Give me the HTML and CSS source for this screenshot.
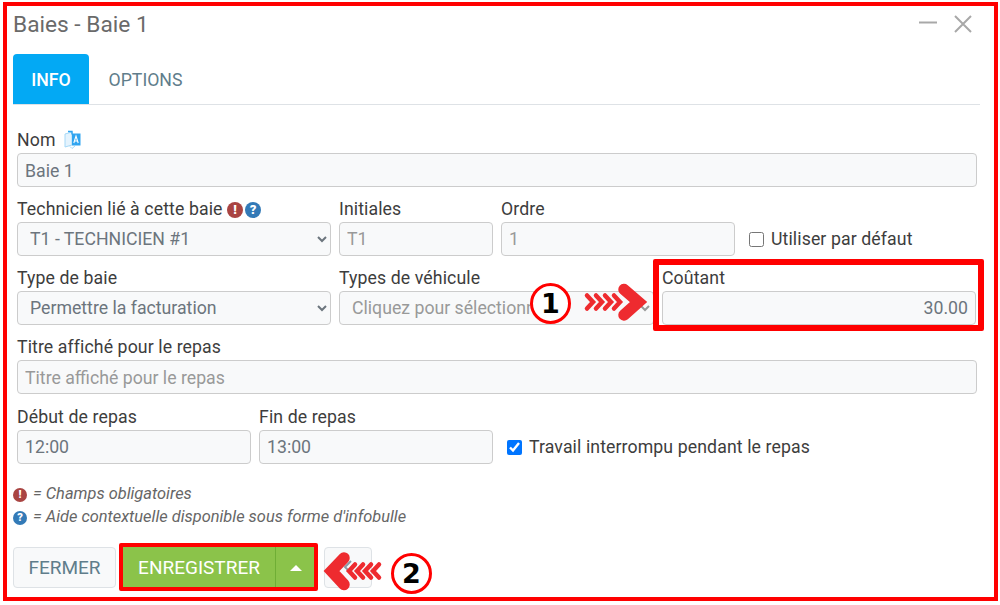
FILE: index.html
```html
<!DOCTYPE html>
<html lang="fr">
<head>
    <meta charset="UTF-8">
    <title>Baies - Baie 1</title>
    <link rel="stylesheet" href="styles.css">
</head>
<body>

<div class="dialog">
    <div class="dialog-head">
        <h1>Baies - Baie 1</h1>
        <div class="win-buttons">
            <svg width="18" height="18" viewBox="0 0 18 18"><path d="M0 7.5h18" stroke="#a8a8a8" stroke-width="2"/></svg>
            <svg width="20" height="20" viewBox="0 0 20 20"><path d="M2 2l16 16M18 2L2 18" stroke="#a8a8a8" stroke-width="2" fill="none"/></svg>
        </div>
    </div>

    <div class="tabs">
        <div class="tab active">INFO</div>
        <div class="tab">OPTIONS</div>
    </div>

    <div class="form">
        <div class="row row-full">
            <div class="field">
                <label>Nom
                    <svg class="translate" width="17" height="19" viewBox="0 0 17 19">
                        <path d="M1 4l7 -2v13l-7 2z" fill="#e4f3fd" stroke="#a5d8f7" stroke-width="1"/>
                        <path d="M8 3.5h8.5v12H8z" fill="#2fa4f0"/>
                        <path d="M4 1.5h4v3" stroke="#2fa4f0" stroke-width="1.4" fill="none"/>
                        <path d="M9.8 13l2.2-7 2.2 7M10.7 11h2.6" stroke="#fff" stroke-width="1.1" fill="none"/>
                        <path d="M6 16.5l2 2 3-2.5" stroke="#a5d8f7" stroke-width="1" fill="none"/>
                    </svg>
                </label>
                <input type="text" value="Baie 1">
            </div>
        </div>

        <div class="row row-tech">
            <div class="field">
                <label>Technicien lié à cette baie
                    <span class="dot dot-red">!</span><span class="dot dot-blue">?</span>
                </label>
                <select><option>T1 - TECHNICIEN #1</option></select>
            </div>
            <div class="field">
                <label>Initiales</label>
                <input type="text" class="muted" value="T1">
            </div>
            <div class="field">
                <label>Ordre</label>
                <input type="text" class="muted" value="1">
            </div>
            <label class="check"><input type="checkbox"> Utiliser par défaut</label>
        </div>

        <div class="row row-type">
            <div class="field">
                <label>Type de baie</label>
                <select><option>Permettre la facturation</option></select>
            </div>
            <div class="field">
                <label>Types de véhicule</label>
                <select class="muted"><option>Cliquez pour sélectionner</option></select>
            </div>
            <div class="field">
                <label>Coûtant</label>
                <input type="text" class="right" value="30.00">
            </div>
        </div>

        <div class="row row-full">
            <div class="field">
                <label>Titre affiché pour le repas</label>
                <input type="text" placeholder="Titre affiché pour le repas">
            </div>
        </div>

        <div class="row row-meal">
            <div class="field">
                <label>Début de repas</label>
                <input type="text" value="12:00">
            </div>
            <div class="field">
                <label>Fin de repas</label>
                <input type="text" value="13:00">
            </div>
            <label class="check"><input type="checkbox" checked> Travail interrompu pendant le repas</label>
        </div>

        <div class="legend">
            <p><span class="dot dot-red">!</span> = Champs obligatoires</p>
            <p><span class="dot dot-blue">?</span> = Aide contextuelle disponible sous forme d'infobulle</p>
        </div>
    </div>

    <div class="actions">
        <button class="btn-close">FERMER</button>
        <div class="btn-save">
            <button class="save-main">ENREGISTRER</button>
            <button class="save-caret"><span class="caret"></span></button>
        </div>
        <button class="btn-extra">
            <svg width="10" height="14" viewBox="0 0 10 14"><path d="M8 1L2 7l6 6" stroke="#8a9ba6" stroke-width="2" fill="none"/></svg>
        </button>
    </div>

    <!-- annotations par-dessus le formulaire -->
    <div class="mark mark-cost"></div>
    <div class="mark mark-save"></div>

    <div class="bubble bubble-1">1</div>
    <div class="bubble bubble-2">2</div>

    <svg class="arrow arrow-1" width="66" height="46" viewBox="0 0 66 46">
        <g fill="none" stroke="#ee2b2f">
            <g stroke-width="4.5" stroke-linecap="round">
                <path d="M5 15.5l6 6.5-6 6.5"/>
                <path d="M14 15.5l6 6.5-6 6.5"/>
                <path d="M23 15.5l6 6.5-6 6.5"/>
                <path d="M32 15.5l6 6.5-6 6.5"/>
            </g>
            <path d="M42 9.5l14.5 12.5-14.5 13" stroke-width="11.5" stroke-linecap="round"/>
        </g>
    </svg>
    <svg class="arrow arrow-2" width="66" height="46" viewBox="0 0 66 46">
        <g fill="none" stroke="#ee2b2f">
            <g stroke-width="4.5" stroke-linecap="round">
                <path d="M9 15.5l6 6.5-6 6.5"/>
                <path d="M17 15.5l6 6.5-6 6.5"/>
                <path d="M25 15.5l6 6.5-6 6.5"/>
                <path d="M33 15.5l6 6.5-6 6.5"/>
            </g>
            <path d="M44 9l12.5 13-12.5 13.5" stroke-width="11.5" stroke-linecap="round"/>
        </g>
    </svg>
</div>

</body>
</html>
```

FILE: styles.css
```css
html, body {
    margin: 0;
    padding: 0;
    background-color: #ffffff;
    overflow: hidden;
}
body {
    font-family: Roboto, Arial, sans-serif;
    font-size: 17.7px;
    letter-spacing: 0.1px;
    color: #3d3d3d;
}
* {
    box-sizing: border-box;
}
.dialog {
    position: relative;
    width: 995px;
    height: 599px;
    margin: 2px 0 0 3px;
    padding: 0 14px 0 6px;
    border: 4px solid #ff0000;
}
.dialog-head {
    display: flex;
    justify-content: space-between;
    align-items: center;
    height: 36px;
    margin: 0 0 12px 0;
}
h1 {
    margin: 0;
    font-size: 22.7px;
    font-weight: 400;
    letter-spacing: 0;
    color: #6a6a6a;
}
.win-buttons {
    display: flex;
    align-items: center;
    gap: 16px;
    margin-right: 7px;
}
.tabs {
    display: flex;
    height: 51px;
    border-bottom: 1px solid #dee2e6;
}
.tab {
    width: 76px;
    height: 50px;
    line-height: 52px;
    text-align: center;
    font-size: 17.7px;
    letter-spacing: 0;
    color: #607d8b;
}
.tab + .tab {
    width: 113px;
}
.tab.active {
    background-color: #03a9f4;
    color: #ffffff;
    font-weight: 500;
    border-radius: 4px 4px 0 0;
}
.form {
    padding: 25px 0 0 4px;
    width: 964px;
}
.row {
    display: grid;
    column-gap: 8px;
    margin-bottom: 12px;
    align-items: end;
}
.row-full {
    grid-template-columns: 960px;
}
.row-tech {
    grid-template-columns: 314px 154px 234px auto;
}
.row-type {
    grid-template-columns: 314px 315px 314px;
}
.row-meal {
    grid-template-columns: 234px 234px auto;
    margin-top: 13px;
}
.field label {
    display: block;
    height: 23px;
    line-height: 21px;
    white-space: nowrap;
}
.translate {
    vertical-align: -3px;
    margin-left: 4px;
}
input[type="text"], select {
    display: block;
    width: 100%;
    height: 34px;
    padding: 0 7px;
    font-family: Roboto, Arial, sans-serif;
    font-size: 17.7px;
    letter-spacing: 0;
    color: #6c757d;
    background-color: #f8f9fa;
    border: 1px solid #ccc;
    border-radius: 4px;
}
.row-full input[type="text"] {
    padding-top: 1px;
}
select {
    padding: 0 8px;
    color: #6c757d;
}
input.muted, select.muted {
    color: #999;
}
input::placeholder {
    color: #999;
}
input.right {
    text-align: right;
    padding-right: 7px;
}
.check {
    display: flex;
    align-items: center;
    gap: 7px;
    height: 34px;
    padding-left: 6px;
    white-space: nowrap;
}
.check input {
    width: 15px;
    height: 15px;
    margin: 0;
}
.dot {
    display: inline-block;
    width: 16px;
    height: 16px;
    margin-right: 2px;
    line-height: 16px;
    border-radius: 50%;
    text-align: center;
    font-size: 13px;
    font-weight: 900;
    font-style: normal;
    color: #ffffff;
    vertical-align: 1px;
}
.dot-red {
    background-color: #a94442;
}
.dot-blue {
    background-color: #337ab7;
}
.legend {
    margin-top: 18px;
    font-size: 16.4px;
    font-style: italic;
    letter-spacing: 0;
    color: #666;
}
.legend p {
    margin: 0;
    height: 23px;
    line-height: 23px;
    margin-left: -4px;
}
.legend .dot {
    width: 14px;
    height: 14px;
    margin-right: 2px;
    line-height: 14px;
    font-size: 11px;
    vertical-align: 1px;
}
.actions {
    display: flex;
    gap: 8px;
    margin-top: 19px;
    height: 41px;
}
.actions button {
    font-family: Roboto, Arial, sans-serif;
    font-size: 19px;
    border-radius: 4px;
    height: 41px;
}
.btn-close {
    width: 103px;
    margin-right: -1px;
    color: #607d8b;
    background-color: #f8f9fa;
    border: 1px solid #dee2e6;
}
.btn-save {
    display: flex;
    width: 192px;
}
.actions .save-main {
    width: 152px;
    padding: 0;
    color: #ffffff;
    background-color: #8bc34a;
    border: none;
    border-radius: 0;
}
.actions .save-caret {
    width: 40px;
    background-color: #8bc34a;
    border: none;
    border-left: 1px solid #6fae35;
    border-radius: 0;
    padding: 0;
}
.caret {
    display: block;
    width: 0;
    height: 0;
    margin: 0 auto;
    border-left: 6px solid transparent;
    border-right: 6px solid transparent;
    border-bottom: 6px solid #ffffff;
}
.btn-extra {
    width: 48px;
    margin-left: 1px;
    padding: 0;
    background-color: #f8f9fa;
    border: 1px solid #dee2e6;
}
.mark {
    position: absolute;
    border: 6px solid #ff0000;
}
.mark-cost {
    left: 646px;
    top: 253px;
    width: 331px;
    height: 72px;
    border-radius: 2px;
}
.mark-save {
    left: 112px;
    top: 537px;
    width: 199px;
    height: 48px;
    border-width: 4px;
    border-radius: 2px;
}
.bubble {
    position: absolute;
    width: 41px;
    height: 41px;
    line-height: 36px;
    text-align: center;
    background-color: #ffffff;
    border: 3px solid #ff0000;
    border-radius: 50%;
    font-family: "DejaVu Sans", sans-serif;
    font-size: 27px;
    font-weight: 700;
    letter-spacing: 0;
    color: #000000;
}
.bubble-1 {
    left: 523px;
    top: 277px;
}
.bubble-2 {
    left: 384px;
    top: 547px;
}
.arrow {
    position: absolute;
}
.arrow-1 {
    left: 575px;
    top: 274px;
}
.arrow-2 {
    left: 315px;
    top: 543px;
    transform: scaleX(-1);
}
```
